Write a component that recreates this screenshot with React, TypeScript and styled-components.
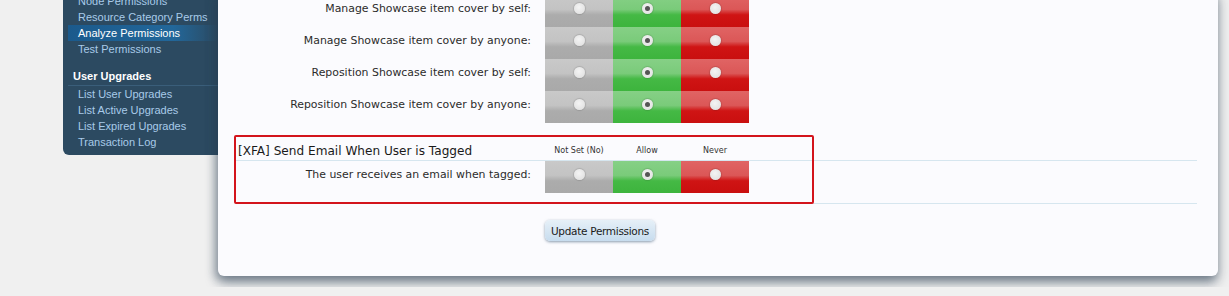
import React from "react";
import styled, { createGlobalStyle } from "styled-components";

const GlobalStyle = createGlobalStyle`
  html, body {
    margin: 0;
    padding: 0;
    background: #f0f0f0;
    overflow: hidden;
  }
  body {
    font-family: "DejaVu Sans", "Liberation Sans", sans-serif;
  }
`;

const Page = styled.div`
  display: flex;
  align-items: flex-start;
  width: 1229px;
  height: 296px;
  margin-top: -9px;
  padding-left: 63px;
  box-sizing: border-box;
`;

const Sidebar = styled.nav`
  width: 155px;
  flex-shrink: 0;
  background: #2c4a61;
  border-bottom-left-radius: 6px;
  padding: 2px 0 5px 5px;
  box-sizing: border-box;
  font-family: "Liberation Sans", "DejaVu Sans", sans-serif;
`;

const NavItem = styled.div<{ $active?: boolean }>`
  height: 16px;
  line-height: 16px;
  padding-left: 10px;
  font-size: 11px;
  color: ${(p) => (p.$active ? "#ffffff" : "#a9cbe9")};
  background: ${(p) =>
    p.$active ? "linear-gradient(to right, #1b5a8c, #22679a 70%, #2c4a61)" : "transparent"};
  white-space: nowrap;
`;

const NavHeading = styled.div`
  margin-top: 11px;
  padding: 0 0 1px 5px;
  height: 16px;
  line-height: 16px;
  font-size: 11px;
  font-weight: bold;
  color: #ffffff;
  border-bottom: 1px solid #3a5e7a;
`;

const Panel = styled.main`
  position: relative;
  width: 1000px;
  flex-shrink: 0;
  background: #fbfbfe;
  border-radius: 0 0 6px 6px;
  box-shadow: 0 6px 12px rgba(40, 60, 80, 0.55), -4px 4px 8px rgba(40, 60, 80, 0.25);
  padding: 4px 21px 35px 18px;
  box-sizing: border-box;
`;

const Rows = styled.div`
  display: flex;
  flex-direction: column;
`;

const Row = styled.div`
  display: flex;
  align-items: stretch;
  height: 32px;
`;

const Label = styled.div`
  width: 295px;
  padding: 6px 14px 0 0;
  text-align: right;
  font-size: 10.9px;
  color: #2b2b2b;
  line-height: 16px;
  white-space: nowrap;
`;

const cellColors = {
  unset: ["#c9c9c9", "#c3c3c3", "#acacac", "#a9a9a9"],
  allow: ["#86d086", "#7acb7a", "#45b945", "#3db43d"],
  never: ["#e06464", "#db5757", "#cf1414", "#c90f0f"],
};

const Cell = styled.div<{ $kind: keyof typeof cellColors }>`
  width: 68px;
  display: flex;
  justify-content: center;
  padding-top: 8px;
  box-sizing: border-box;
  background: ${(p) => {
    const c = cellColors[p.$kind];
    return `linear-gradient(to bottom, ${c[0]} 0%, ${c[1]} 45%, ${c[2]} 62%, ${c[3]} 100%)`;
  }};
`;

const Radio = styled.span<{ $checked?: boolean }>`
  width: 11px;
  height: 11px;
  border-radius: 50%;
  background: radial-gradient(circle at 45% 40%, #f4f4f4, #dcdcdc);
  box-shadow: 0 0 1px 1px rgba(0, 0, 0, 0.12);
  display: flex;
  align-items: center;
  justify-content: center;
  &::after {
    content: "";
    width: 5px;
    height: 5px;
    border-radius: 50%;
    background: ${(p) => (p.$checked ? "#555" : "transparent")};
  }
`;

const GroupHeader = styled.div`
  display: flex;
  align-items: flex-end;
  margin-top: 14px;
  height: 24px;
  border-bottom: 1px solid #d6e6ef;
  box-sizing: border-box;
  padding-bottom: 2px;
`;

const GroupTitle = styled.h3`
  margin: 0;
  width: 309px;
  padding-left: 2px;
  box-sizing: border-box;
  font-size: 12.1px;
  font-weight: normal;
  color: #1a1a1a;
  white-space: nowrap;
`;

const ColHead = styled.div`
  width: 68px;
  text-align: center;
  font-size: 8px;
  color: #333;
  padding-bottom: 3px;
`;

const GroupBody = styled.div`
  border-bottom: 1px solid #d6e6ef;
  padding-bottom: 10px;
`;

const Highlight = styled.div`
  position: absolute;
  left: 16px;
  top: 144px;
  width: 576px;
  height: 65px;
  border: 2px solid #d3141c;
  border-radius: 2px;
  pointer-events: none;
`;

const Actions = styled.div`
  display: flex;
  padding: 16px 0 0 309px;
`;

const Button = styled.button`
  font-family: "DejaVu Sans", sans-serif;
  font-size: 10.5px;
  letter-spacing: -0.3px;
  color: #1a1a1a;
  width: 110px;
  height: 21px;
  padding: 0;
  border: none;
  border-radius: 5px;
  background: linear-gradient(to bottom, #e6f0f8, #c7dcee);
  box-shadow: 0 1px 3px rgba(60, 90, 120, 0.6);
`;

const navTop = [
  { label: "Node Permissions" },
  { label: "Resource Category Perms" },
  { label: "Analyze Permissions", active: true },
  { label: "Test Permissions" },
];

const navUpgrades = [
  "List User Upgrades",
  "List Active Upgrades",
  "List Expired Upgrades",
  "Transaction Log",
];

const showcaseRows = [
  "Manage Showcase item cover by self:",
  "Manage Showcase item cover by anyone:",
  "Reposition Showcase item cover by self:",
  "Reposition Showcase item cover by anyone:",
];

const PermRow = ({ label }: { label: string }) => (
  <Row>
    <Label>{label}</Label>
    <Cell $kind="unset">
      <Radio />
    </Cell>
    <Cell $kind="allow">
      <Radio $checked />
    </Cell>
    <Cell $kind="never">
      <Radio />
    </Cell>
  </Row>
);

const App = () => (
  <>
    <GlobalStyle />
    <Page>
      <Sidebar>
        {navTop.map((n) => (
          <NavItem key={n.label} $active={n.active}>
            {n.label}
          </NavItem>
        ))}
        <NavHeading>User Upgrades</NavHeading>
        {navUpgrades.map((n) => (
          <NavItem key={n}>{n}</NavItem>
        ))}
      </Sidebar>
      <Panel>
        <Rows>
          {showcaseRows.map((r) => (
            <PermRow key={r} label={r} />
          ))}
        </Rows>
        <GroupHeader>
          <GroupTitle>[XFA] Send Email When User is Tagged</GroupTitle>
          <ColHead>Not Set (No)</ColHead>
          <ColHead>Allow</ColHead>
          <ColHead>Never</ColHead>
        </GroupHeader>
        <GroupBody>
          <PermRow label="The user receives an email when tagged:" />
        </GroupBody>
        <Actions>
          <Button>Update Permissions</Button>
        </Actions>
        <Highlight />
      </Panel>
    </Page>
  </>
);

export default App;
